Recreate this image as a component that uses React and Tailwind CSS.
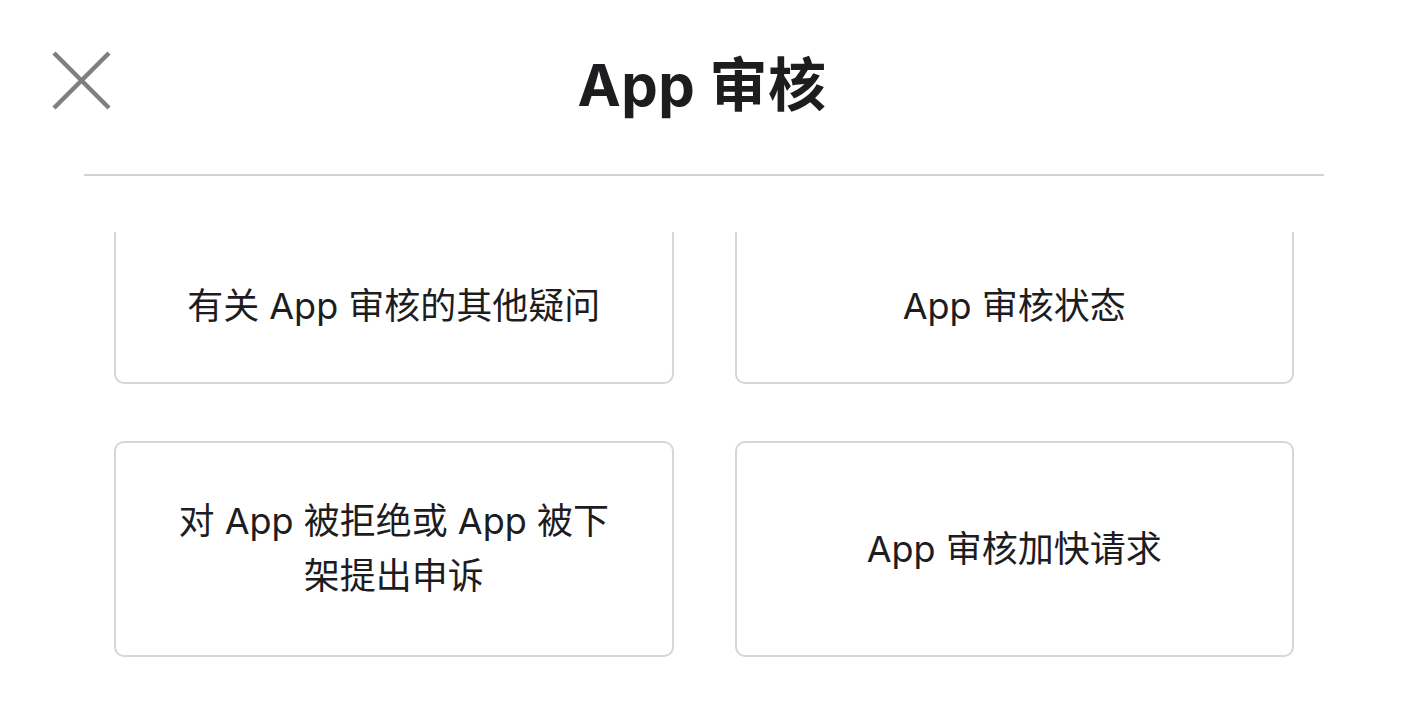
import React from "react";

function Card({ children }) {
  return (
    <div className="border-2 border-[#d6d6d6] rounded-[10px] flex items-center justify-center text-center px-[30px] text-[36px] leading-[55px] text-[#1d1d1f]">
      {children}
    </div>
  );
}

export default function App() {
  return (
    <div className="w-[1404px] h-[704px] bg-white overflow-hidden flex flex-col font-['Inter','Noto_Sans_CJK_SC',sans-serif]">
      <header className="relative h-[174px] pb-[4px] flex items-center justify-center shrink-0">
        <button className="absolute left-[50px] top-[49px] w-[63px] h-[63px] flex items-center justify-center">
          <svg width="63" height="63" viewBox="0 0 63 63">
            <path d="M4 4 L59 59 M59 4 L4 59" stroke="#7f7f7f" strokeWidth="4.5" strokeLinecap="butt" />
          </svg>
        </button>
        <h1 className="text-[58px] font-bold leading-none text-[#1d1d1f] tracking-[0.5px]">App 审核</h1>
      </header>
      <div className="ml-[84px] w-[1240px] h-[2px] bg-[#d2d2d7] shrink-0" />
      <div className="mt-[56px] flex-1 overflow-hidden">
        <div className="-mt-[8px] ml-[114px] w-[1180px] grid grid-cols-2 grid-rows-[160px_216px] gap-x-[61px] gap-y-[57px]">
          <Card>
            <span className="relative top-[2px]">有关 App 审核的其他疑问</span>
          </Card>
          <Card>
            <span className="relative top-[2px]">App 审核状态</span>
          </Card>
          <Card>
            <span>
              对 App 被拒绝或 App 被下
              <br />
              架提出申诉
            </span>
          </Card>
          <Card>App 审核加快请求</Card>
        </div>
      </div>
    </div>
  );
}
